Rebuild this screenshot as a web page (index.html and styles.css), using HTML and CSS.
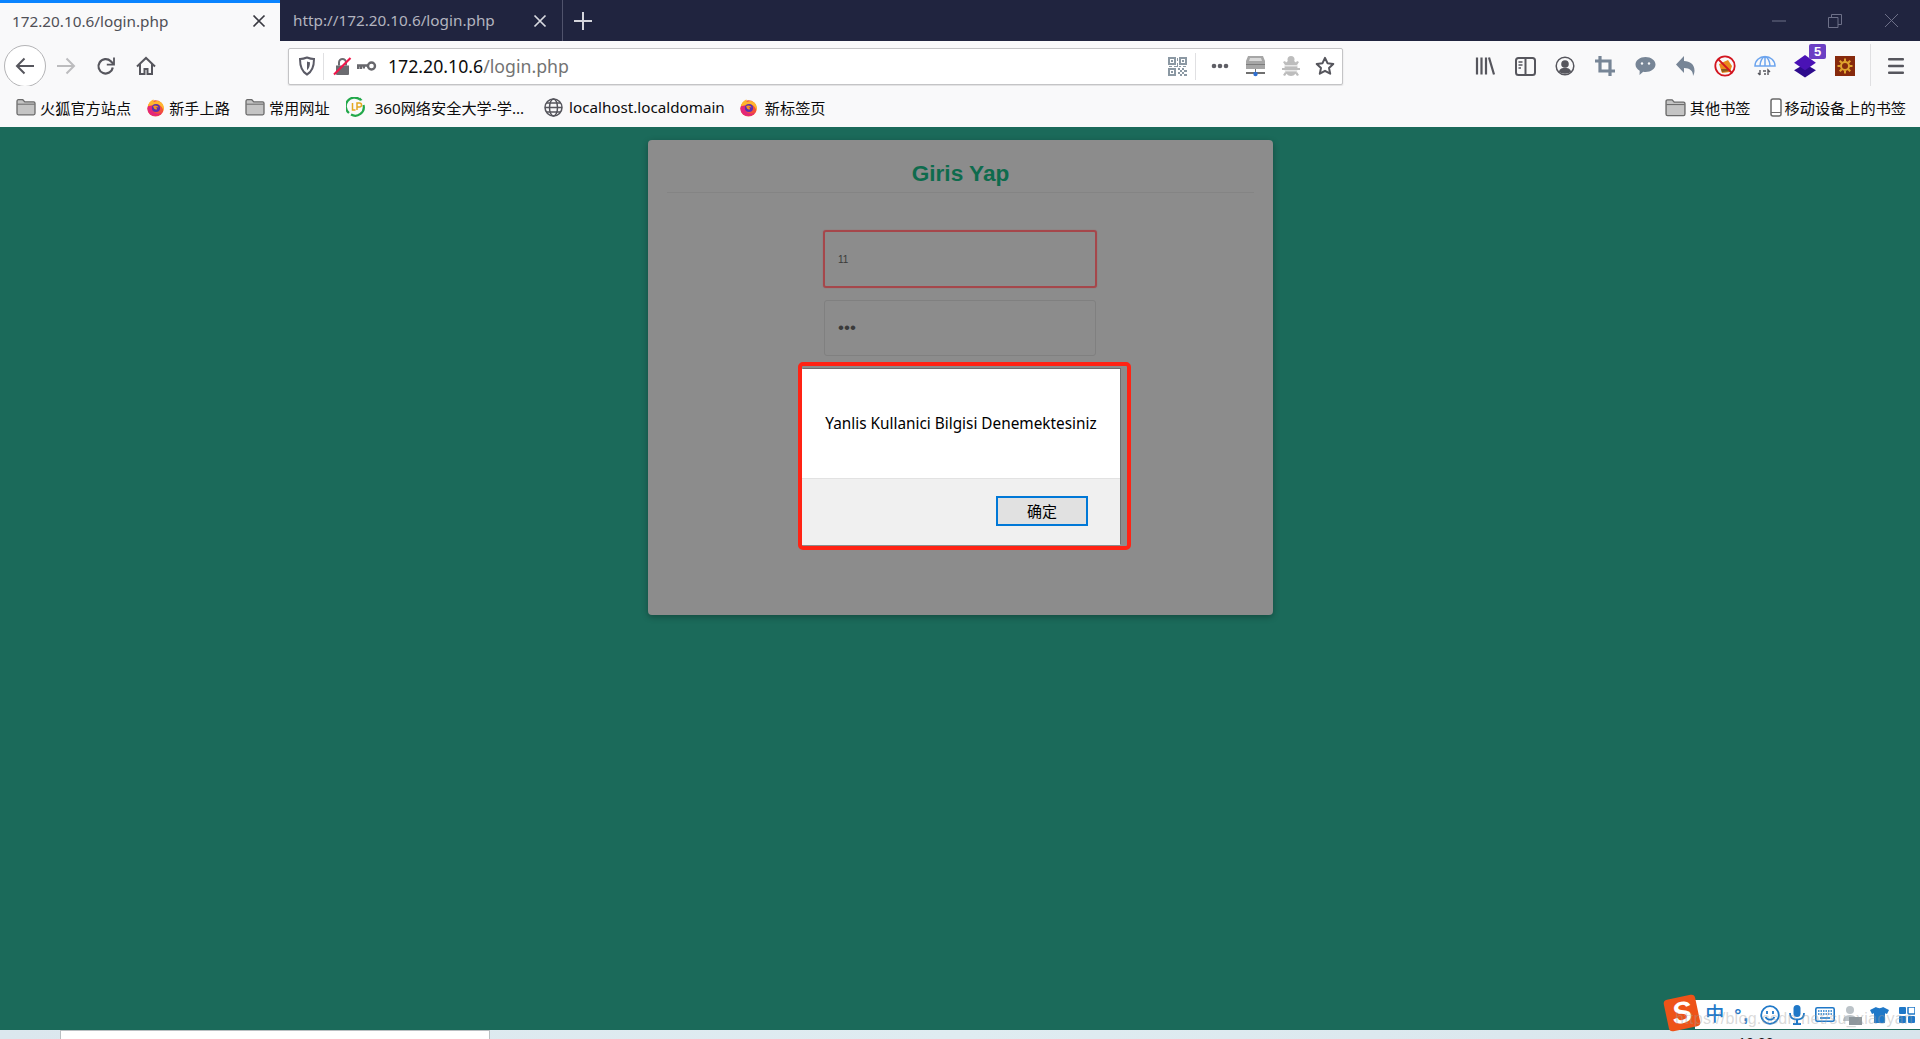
FILE: index.html
```html
<!DOCTYPE html>
<html lang="tr">
<head>
<meta charset="utf-8">
<title>Giris Yap</title>
<link rel="stylesheet" href="styles.css">
</head>
<body>
<svg class="defs" width="0" height="0" aria-hidden="true">
  <symbol id="folder" viewBox="0 0 20 18"><path d="M1 3.200c0-.9.6-1.500 1.400-1.500h4.400l2 2.200h8.800c.8 0 1.400.6 1.400 1.400v10c0 .9-.6 1.500-1.400 1.500H2.400c-.8 0-1.400-.6-1.400-1.500z" fill="#c4c4c4" stroke="#6a6a6a" stroke-width="1.300"/><path d="M1.400 6.200h17.200" stroke="#6a6a6a" stroke-width="1"/></symbol>
  <symbol id="fox" viewBox="0 0 20 20"><circle cx="10" cy="11" r="8.600" fill="#f2503c"/><path d="M2 8.500C3 4 6 2 8 1.500 7.400 3 8 3.800 9 4c3-1.600 7-.6 9 3 1 2 1.200 5 .3 7-.4-3.500-2.300-6-5-7z" fill="#ffb52e"/><path d="M2 9c-1.500 5 2 10 8 10 3 0 5.500-1.500 7-4-3 2.500-8 2-10-1.500C6 11 6 9 7 8z" fill="#e3267a"/><circle cx="10.500" cy="10.500" r="4.300" fill="#5b2fb0"/><path d="M7.500 8.500c2-1.300 5-.6 5.800 1.500-1.300-.6-2.300-.4-3 .2 1 .2 1.500.9 1.300 1.700-1.500.8-3.500 0-4.100-3.400z" fill="#f7921e"/></symbol>
</svg>

<header class="tabbar">
  <div class="tab tab-active">
    <span class="tab-title">172.20.10.6/login.php</span>
    <svg class="tab-x" width="14" height="14" viewBox="0 0 14 14"><path d="M1.500 1.500l11 11M12.500 1.500l-11 11" stroke="#3a3a42" stroke-width="1.700"/></svg>
  </div>
  <div class="tab tab-idle">
    <span class="tab-title">http://172.20.10.6/login.php</span>
    <svg class="tab-x" width="14" height="14" viewBox="0 0 14 14"><path d="M1.500 1.500l11 11M12.500 1.500l-11 11" stroke="#d8d9e0" stroke-width="1.700"/></svg>
  </div>
  <div class="newtab"><svg width="18" height="18" viewBox="0 0 18 18"><path d="M9 0v18M0 9h18" stroke="#d4d5dc" stroke-width="2"/></svg></div>
  <div class="winctl">
    <svg width="14" height="14" viewBox="0 0 14 14"><path d="M0 7h14" stroke="#6d7088" stroke-width="1"/></svg>
    <svg width="14" height="14" viewBox="0 0 14 14" fill="none" stroke="#6d7088"><path d="M.5 3.500h9.500v10H.5zM3.500 3.500v-3h10v10H10"/></svg>
    <svg width="15" height="15" viewBox="0 0 15 15"><path d="M1 1l13 13M14 1L1 14" stroke="#6d7088" stroke-width="1"/></svg>
  </div>
</header>

<nav class="navbar">
  <div class="btn-back"><svg width="20" height="20" viewBox="0 0 20 20" fill="none" stroke="#56565d" stroke-width="2"><path d="M19 10H2M9.500 2.500L2 10l7.500 7.500"/></svg></div>
  <div class="navbtn"><svg width="20" height="20" viewBox="0 0 20 20" fill="none" stroke="#bcbcbe" stroke-width="2"><path d="M1 10h17M10.500 2.500L18 10l-7.500 7.500"/></svg></div>
  <div class="navbtn"><svg width="20" height="20" viewBox="0 0 20 20" fill="none" stroke="#56565d" stroke-width="2.200"><path d="M16.800 11.500a7.200 7.200 0 1 1-2-6.300L17.500 8"/><path d="M18 1.500v7.200h-7.200" stroke-width="1.800"/></svg></div>
  <div class="navbtn"><svg width="20" height="20" viewBox="0 0 20 20" fill="none" stroke="#56565d" stroke-width="2"><path d="M1 10.500L10 2l9 8.500"/><path d="M4 8v10h4.500v-5h3v5H16V8"/></svg></div>

  <div class="urlbar">
    <svg class="u-shield" width="18" height="20" viewBox="0 0 18 20" fill="none" stroke="#5b5b66" stroke-width="2"><path d="M9 1.500c2.500 1 4.500 1.500 7 1.500 0 7-1.500 12.500-7 15.500C3.500 15.500 2 10 2 3c2.500 0 4.500-.5 7-1.500z"/><path d="M9 5.500c1 .4 2 .6 3 .7 0 3.500-.8 6.300-3 8z" fill="#5b5b66" stroke="none"/></svg>
    <span class="u-sep"></span>
    <svg class="u-lock" width="19" height="20" viewBox="0 0 19 20"><path d="M3 9.500h13V18a1 1 0 0 1-1 1H4a1 1 0 0 1-1-1z" fill="#6b6b70"/><path d="M6 9.500V6.500a3.500 3.500 0 0 1 7 0v3" fill="none" stroke="#6b6b70" stroke-width="2"/><path d="M1 18.500L17.500 2" stroke="#f0174a" stroke-width="2.200"/></svg>
    <svg class="u-key" width="20" height="12" viewBox="0 0 20 12" fill="none" stroke="#67676c"><circle cx="14.500" cy="6" r="3.500" stroke-width="2.400"/><path d="M11 5.500H1V9M3.800 5.500V9M6.800 5.500V8.500" stroke-width="2.400"/></svg>
    <span class="u-text"><span class="u-host">172.20.10.6</span><span class="u-path">/login.php</span></span>
    <svg class="u-qr" width="19" height="19" viewBox="0 0 19 19" fill="#8b98a3"><path d="M0 0h8v8H0zm2 2v4h4V2zM11 0h8v8h-8zm2 2v4h4V2zM0 11h8v8H0zm2 2v4h4v-4z" fill-rule="evenodd"/><path d="M3 3h2v2H3zM14 3h2v2h-2zM3 14h2v2H3zM9 1h1v3H9zM9 6h1v4H9zM1 9h3v1H1zM6 9h3v1H6zM11 9h2v1h-2zM15 9h3v1h-3zM10 11h2v2h-2zM14 11h2v2h-2zM12 13h2v2h-2zM16 13h3v2h-3zM10 15h2v2h-2zM14 15h2v2h-2zM12 17h2v2h-2zM16 17h3v2h-3z"/></svg>
    <span class="u-sep u-sep2"></span>
    <svg class="u-dots" width="18" height="6" viewBox="0 0 18 6" fill="#5f5f66"><circle cx="3" cy="3" r="2.300"/><circle cx="9" cy="3" r="2.300"/><circle cx="15" cy="3" r="2.300"/></svg>
    <svg class="u-srv" width="21" height="22" viewBox="0 0 21 22"><path d="M3 1h15l2 5v8H1V6z" fill="#a6a6a6"/><path d="M5 3h11l1 3H4z" fill="#d8d8d8"/><path d="M1 9h19v1H1z" fill="#7d7d7d"/><path d="M10 14h1v4h-1zM1 17h19v2H1z" fill="#6f6f6f"/><circle cx="10.500" cy="19" r="2.200" fill="#2f6fd1"/></svg>
    <svg class="u-bug" width="18" height="22" viewBox="0 0 18 22" fill="#bdbdbd"><ellipse cx="9" cy="13" rx="6.500" ry="8"/><circle cx="9" cy="4.500" r="3.500"/><path d="M1 7l2-1 2 3-2 1zM17 7l-2-1-2 3 2 1zM0 13h3v2H0zM15 13h3v2h-3zM1 20l2 1 2-3-2-1zM17 20l-2 1-2-3 2-1z"/><path d="M3 10h12v1.500H3zM3 15h12v1.500H3z" fill="#e8e8e8"/></svg>
    <svg class="u-star" width="20" height="20" viewBox="0 0 20 20" fill="none" stroke="#55555c" stroke-width="2" stroke-linejoin="round"><path d="M10 1.800l2.500 5.400 5.800.7-4.300 4 1.200 5.800L10 14.800l-5.200 2.900L6 11.900l-4.300-4 5.800-.7z"/></svg>
  </div>

  <div class="tools">
    <div class="tool"><svg width="20" height="20" viewBox="0 0 20 20" fill="none" stroke="#56565d" stroke-width="2.200"><path d="M2 1.500v17M6.500 1.500v17M11 1.500v17M14 1.500l5 17"/></svg></div>
    <div class="tool"><svg width="21" height="19" viewBox="0 0 21 19" fill="none" stroke="#56565d" stroke-width="2"><rect x="1" y="1" width="19" height="17" rx="2.500"/><path d="M10.500 1v17"/><path d="M3.500 5h4M3.500 8h4M3.500 11h2.500" stroke-width="1.500"/></svg></div>
    <div class="tool"><svg width="20" height="20" viewBox="0 0 20 20"><circle cx="10" cy="10" r="8.800" fill="none" stroke="#56565d" stroke-width="1.500"/><circle cx="10" cy="8" r="3.800" fill="#56565d"/><path d="M3.800 15.500c1-2.800 3.500-3.800 6.200-3.800s5.200 1 6.200 3.800c-3.500 3-8.900 3-12.400 0z" fill="#56565d"/></svg></div>
    <div class="tool"><svg width="20" height="20" viewBox="0 0 20 20" fill="none" stroke="#778596" stroke-width="3.200"><path d="M5 0v15h15M0 5h15v15"/></svg></div>
    <div class="tool"><svg width="21" height="20" viewBox="0 0 21 20"><path d="M10.500 1C16 1 20.500 4.300 20.500 8.500S16 16 10.500 16c-.8 0-1.500 0-2.300-.2L4.500 19l.2-4.200C2.200 13.400.5 11.100.5 8.500.5 4.300 5 1 10.500 1z" fill="#778596"/><circle cx="7" cy="7.500" r="1.200" fill="#f9f9fa"/><circle cx="14" cy="7.500" r="1.200" fill="#f9f9fa"/></svg></div>
    <div class="tool"><svg width="19" height="20" viewBox="0 0 19 20"><path d="M8 0v5c6 0 10.500 3.500 10.500 9.500 0 2-.6 4-1.500 5.500.3-5-3-8-9-8v5L0 8.500z" fill="#778596"/></svg></div>
    <div class="tool"><svg width="22" height="22" viewBox="0 0 22 22"><path d="M5 9l9-4 4 6-2 6-8 1z" fill="#e98a1c"/><path d="M7 14h7l1 2-7 1z" fill="#8a5a20"/><circle cx="11" cy="11" r="9.700" fill="none" stroke="#d3151f" stroke-width="1.800"/><path d="M4 4l14 14" stroke="#d3151f" stroke-width="1.800"/></svg></div>
    <div class="tool"><svg width="22" height="22" viewBox="0 0 22 22" fill="none" stroke="#6ea5ee" stroke-width="1.500"><path d="M1 11a10 9.500 0 0 1 20 0H1zM6 11c0-5 2.500-9 5-9.500 2.500.5 5 4.500 5 9.500M11 1.500V11"/><path d="M6 15v5M4 18l2 2M14 20v-5l2 2M9 16h3M10 19h2" stroke="#55555c" stroke-width="1.400"/></svg></div>
    <div class="tool tool-badge"><svg width="24" height="24" viewBox="0 0 22 22"><path d="M11 9l10 6-10 6.500L1 15z" fill="#2d0b8c"/><path d="M11 1l10 7-10 7L1 8z" fill="#4a12b5"/></svg><span class="badge">5</span></div>
    <div class="tool"><svg width="20" height="20" viewBox="0 0 20 20"><rect width="20" height="20" fill="#872a0d"/><circle cx="10" cy="10" r="4" fill="none" stroke="#e0a32e" stroke-width="2"/><path d="M10 2.500v3M10 14.500v3M2.500 10h3M14.500 10h3M4.700 4.700l2.100 2.100M13.200 13.200l2.100 2.100M15.300 4.700l-2.100 2.100M6.800 13.200l-2.100 2.100" stroke="#e0a32e" stroke-width="2"/></svg></div>
    <span class="tool-sep"></span>
    <div class="tool"><svg width="16" height="16" viewBox="0 0 16 16" fill="#56565d"><rect y="0" width="16" height="2.400" rx="1"/><rect y="6.800" width="16" height="2.400" rx="1"/><rect y="13.600" width="16" height="2.400" rx="1"/></svg></div>
  </div>
</nav>

<div class="bookmarks">
  <a class="bm bm-1"><svg class="bm-icon" width="20" height="18"><use href="#folder"/></svg>火狐官方站点</a>
  <a class="bm bm-2"><svg class="bm-icon" width="19" height="19"><use href="#fox"/></svg>新手上路</a>
  <a class="bm bm-3"><svg class="bm-icon" width="20" height="18"><use href="#folder"/></svg>常用网址</a>
  <a class="bm bm-4"><svg class="bm-icon bm-icon-wide" width="19" height="20" viewBox="0 0 19 20" fill="none"><path d="M14 2.500A8.500 8.500 0 0 0 3 16" stroke="#22a84a" stroke-width="2.200"/><path d="M5 17.500A8.500 8.500 0 0 0 17.500 8" stroke="#22a84a" stroke-width="2.200"/><path d="M6.500 6v7h3M11 13V6h2.500a2 2 0 0 1 0 4H11" stroke="#e3a81f" stroke-width="1.500"/><path d="M14 .5l2.500 2.500-3 1z" fill="#22a84a"/></svg>360网络安全大学-学...</a>
  <a class="bm bm-5"><svg class="bm-icon bm-icon-globe" width="19" height="19" viewBox="0 0 19 19" fill="none" stroke="#55555c" stroke-width="1.500"><circle cx="9.500" cy="9.500" r="8.500"/><ellipse cx="9.500" cy="9.500" rx="4" ry="8.500"/><path d="M1 9.500h17M2.500 5h14M2.500 14h14"/></svg>localhost.localdomain</a>
  <a class="bm bm-6"><svg class="bm-icon bm-icon-new" width="19" height="19"><use href="#fox"/></svg>新标签页</a>
  <a class="bm bm-7"><svg class="bm-icon" width="21" height="19"><use href="#folder"/></svg>其他书签</a>
  <a class="bm bm-8"><svg class="bm-phone" width="12" height="19" viewBox="0 0 12 19"><rect x="1" y="1" width="10" height="17" rx="2" fill="#fff" stroke="#6a6a6a" stroke-width="1.500"/><path d="M1 14.500h10" stroke="#6a6a6a"/></svg>移动设备上的书签</a>
</div>

<main class="page">
  <section class="card">
    <h2 class="card-title">Giris Yap</h2>
    <form class="form">
      <input class="field field-error" type="text" value="11">
      <input class="field field-pass" type="password" value="111">
    </form>
  </section>

  <div class="annot">
    <div class="dialog" role="alertdialog">
      <div class="dialog-msg">Yanlis Kullanici Bilgisi Denemektesiniz</div>
      <div class="dialog-foot"><button class="dialog-ok" type="button">确定</button></div>
    </div>
  </div>

  <div class="ime">
    <span class="ime-logo">S</span>
    <span class="ime-item ime-zh">中</span>
    <span class="ime-item ime-punct">°,</span>
    <span class="ime-item"><svg width="20" height="20" viewBox="0 0 20 20" fill="none" stroke="#1f78c8" stroke-width="1.800"><circle cx="10" cy="10" r="8.800"/><path d="M7 6v3M13 6v3M5.500 12c2 3.500 7 3.500 9 0"/></svg></span>
    <span class="ime-item"><svg width="16" height="20" viewBox="0 0 16 20" fill="#1f78c8"><rect x="4.500" y="0" width="7" height="12" rx="3.500"/><path d="M1 8c0 5 3 6.500 7 6.500S15 13 15 8" fill="none" stroke="#1f78c8" stroke-width="1.800"/><path d="M7 14h2v4h3v2H4v-2h3z"/></svg></span>
    <span class="ime-item"><svg width="20" height="15" viewBox="0 0 20 15"><rect x=".8" y=".8" width="18.400" height="13.400" rx="1.500" fill="none" stroke="#1f78c8" stroke-width="1.600"/><path d="M3 4h14M3 7h14" stroke="#1f78c8" stroke-width="1.600" stroke-dasharray="1.500 1"/><path d="M5 11h10" stroke="#1f78c8" stroke-width="1.600"/></svg></span>
    <span class="ime-item"><svg width="20" height="20" viewBox="0 0 20 20"><circle cx="8" cy="5" r="4" fill="#bcc3c8"/><path d="M1 16c0-4 3-6 7-6s7 2 7 6z" fill="#bcc3c8"/><rect x="7" y="12" width="13" height="8" fill="#8e979d"/></svg></span>
    <span class="ime-item"><svg width="19" height="16" viewBox="0 0 19 16"><path d="M6 0c1.500 1.500 5.500 1.500 7 0l6 3-2 4-2-.8V16H4V6.200L2 7 0 3z" fill="#1f78c8"/></svg></span>
    <span class="ime-item"><svg width="16" height="16" viewBox="0 0 16 16" fill="#1f78c8"><rect width="7" height="7" rx="1"/><rect x="9" width="7" height="7" rx="1" fill="none" stroke="#1f78c8" stroke-width="1.500"/><rect y="9" width="7" height="7" rx="1"/><rect x="9" y="9" width="7" height="7" rx="1"/></svg></span>
    <span class="ime-mark">https://blog.csdn.net/su_xiaoyan</span>
  </div>
</main>

<footer class="taskbar">
  <span class="task-window"></span>
  <span class="task-clock">19:00</span>
</footer>
</body>
</html>
```

FILE: styles.css
```css
* { box-sizing: border-box; }

html, body { height: 100%; }

body {
  margin: 0;
  height: 1039px;
  overflow: hidden;
  display: flex;
  flex-direction: column;
  font-family: "Noto Sans", "Noto Sans CJK SC", sans-serif;
  color: #0c0c0d;
  background: #1b6a5a;
}

.defs { position: absolute; }

/* Tab strip */
.tabbar {
  flex: 0 0 41px;
  min-height: 0;
  display: flex;
  background: #20243f;
}

.tab {
  display: flex;
  align-items: center;
  justify-content: space-between;
  font-size: 15.300px;
}

.tab-title { margin-top: -3px; white-space: nowrap; }
.tab-x { margin-top: -2px; }

.tab-active {
  width: 280px;
  padding: 0 14px 0 12px;
  background: #f9f9fa;
  border-top: 3px solid #0a84ff;
  color: #4f4f56;
}

.tab-idle {
  width: 283px;
  padding: 0 15px 0 13px;
  border-right: 1px solid #50536c;
  color: #b3b4bf;
}

.tab-idle .tab-title { margin-top: -1px; }
.tab-idle .tab-x { margin-top: 0; }

.newtab {
  width: 40px;
  display: flex;
  align-items: center;
  justify-content: center;
}

.winctl {
  margin-left: auto;
  padding: 0 21px 0 0;
  display: flex;
  align-items: center;
  gap: 42px;
}

/* Navigation bar */
.navbar {
  flex: 0 0 45px;
  min-height: 0;
  display: flex;
  align-items: center;
  padding-top: 5px;
  background: #f9f9fa;
}

.btn-back {
  width: 42px;
  height: 42px;
  margin-left: 4px;
  border: 1px solid #b4b4b6;
  border-radius: 50%;
  background: #fff;
  display: flex;
  align-items: center;
  justify-content: center;
}

.navbtn {
  width: 40px;
  display: flex;
  justify-content: center;
}

.urlbar {
  width: 1055px;
  height: 37px;
  margin-left: 122px;
  display: flex;
  align-items: center;
  background: #fff;
  border: 1px solid #c4c4c6;
  border-radius: 2px;
  box-shadow: 0 1px 2px rgba(0, 0, 0, .12);
}

.u-shield { margin-left: 9px; }
.u-sep { width: 1px; height: 27px; margin-left: 7px; background: #e0e0e2; }
.u-lock { margin-left: 9px; }
.u-key { margin-left: 5px; }
.u-text { margin-left: 11px; font-size: 17.700px; white-space: nowrap; }
.u-host { color: #0c0c0d; }
.u-path { color: #737373; }
.u-qr { margin-left: auto; }
.u-sep2 { margin-left: 8px; }
.u-dots { margin-left: 15px; }
.u-srv { margin-left: 16px; }
.u-bug { margin-left: 16px; }
.u-star { margin-left: 15px; margin-right: 7px; }

.tools {
  margin-left: auto;
  margin-right: 4px;
  display: flex;
  align-items: center;
}

.tool {
  width: 40px;
  height: 24px;
  display: flex;
  align-items: center;
  justify-content: center;
}

.tool-badge { position: relative; }

.badge {
  position: absolute;
  top: -10px;
  left: 24px;
  width: 17px;
  height: 15px;
  border-radius: 2px;
  background: #6b3fc4;
  color: #fff;
  font: bold 13px/15px "Liberation Sans", sans-serif;
  text-align: center;
}

.tool-sep {
  width: 1px;
  height: 44px;
  margin: 0 5px;
  background: #e0e0e2;
}

/* Bookmarks */
.bookmarks {
  flex: 0 0 41px;
  min-height: 0;
  display: flex;
  align-items: center;
  padding: 1px 14px 0 16px;
  background: #f9f9fa;
  font-size: 15.200px;
  white-space: nowrap;
}

.bm {
  display: flex;
  align-items: center;
  color: #0c0c0d;
  height: 24px;
}

.bm-icon { margin-right: 4px; flex: none; }
.bm-icon-wide { margin-right: 10px; }
.bm-icon-globe { margin-right: 6px; }
.bm-icon-new { margin-right: 7px; }
.bm-phone { margin-right: 3px; flex: none; }
.bm-2 { margin-left: 15px; }
.bm-3 { margin-left: 15px; }
.bm-4 { margin-left: 16px; }
.bm-5 { margin-left: 20px; }
.bm-6 { margin-left: 14px; }
.bm-7 { margin-left: auto; }
.bm-8 { margin-left: 19px; }

/* Page */
.page {
  flex: 1;
  min-height: 0;
  position: relative;
  background: #1b6a5a;
}

.card {
  width: 625px;
  height: 475px;
  margin: 13px 0 0 648px;
  padding: 0 19px;
  background: #8c8c8c;
  border-radius: 4px;
  box-shadow: 0 2px 6px rgba(0, 0, 0, .3);
}

.card-title {
  height: 53px;
  margin: 0;
  padding-top: 20px;
  font: bold 22.600px/28px "Liberation Sans", Arial, sans-serif;
  text-align: center;
  color: #0e6b4d;
  border-bottom: 1px solid #848484;
}

.form {
  padding: 37px 1px 0 0;
  display: flex;
  flex-direction: column;
  align-items: center;
}

.field {
  display: block;
  background: transparent;
  font-family: "Liberation Sans", Arial, sans-serif;
  color: #3a3a3a;
  outline: none;
  border-radius: 3px;
  padding: 0 13px;
}

.field-error {
  width: 274px;
  height: 58px;
  font-size: 10px;
  border: 2px solid #a5474b;
  box-shadow: 0 0 1px #a5474b;
}

.field-pass {
  width: 272px;
  height: 56px;
  margin-top: 12px;
  font-size: 17px;
  border: 1px solid #808080;
}

/* Alert with red annotation */
.annot {
  position: absolute;
  left: 798px;
  top: 235px;
  width: 333px;
  height: 188px;
  padding: 3px 7px 0 0;
  border: 4px solid #ff2314;
  border-radius: 5px;
}

.dialog {
  width: 318px;
  height: 176px;
  background: #fff;
  box-shadow: 1px -1px 0 #6f6f6f;
  display: flex;
  flex-direction: column;
}

.dialog-msg {
  flex: 0 0 109px;
  display: flex;
  align-items: center;
  justify-content: center;
  padding-bottom: 2px;
  font-size: 15.350px;
  color: #000;
  white-space: nowrap;
}

.dialog-foot {
  flex: 1;
  display: flex;
  align-items: flex-start;
  justify-content: flex-end;
  padding: 17px 32px 0 0;
  background: #f0f0f0;
  border-top: 1px solid #e2e2e2;
}

.dialog-ok {
  width: 92px;
  height: 30px;
  padding: 0;
  font: 15px/26px "Noto Sans CJK SC", sans-serif;
  color: #000;
  background: #e1e1e1;
  border: 2px solid #0078d7;
}

/* IME toolbar */
.ime {
  position: absolute;
  right: 0;
  bottom: 1px;
  width: 225px;
  height: 29px;
  padding-left: 6px;
  display: flex;
  align-items: center;
  background: #fff;
}

.ime-item {
  flex: 0 0 27.500px;
  display: flex;
  align-items: center;
  justify-content: center;
  color: #1f78c8;
}

.ime-zh { font-size: 19px; font-weight: 500; line-height: 1; }
.ime-punct { font: bold 18px/1 "Liberation Sans", sans-serif; letter-spacing: 2px; }

.ime-logo {
  position: absolute;
  left: -29px;
  top: -3px;
  width: 32px;
  height: 32px;
  border-radius: 4px;
  background: #ee5318;
  color: #fff;
  font: italic bold 30px/32px "Liberation Sans", sans-serif;
  text-align: center;
  transform: rotate(-12deg);
}

.ime-mark {
  position: absolute;
  left: -20px;
  top: 10px;
  font: 16px/18px "Liberation Sans", sans-serif;
  letter-spacing: .3px;
  color: rgba(160, 160, 160, .4);
  white-space: nowrap;
}

/* Taskbar */
.taskbar {
  flex: 0 0 9px;
  min-height: 0;
  display: flex;
  overflow: hidden;
  background: linear-gradient(90deg, #dbe7ee, #dfecf1 50%, #d8e5ec);
}

.task-window {
  width: 430px;
  height: 20px;
  margin-left: 60px;
  background: #fff;
  border: 1px solid #b9bfc2;
}

.task-clock {
  margin: 6px 0 0 1248px;
  font-size: 14px;
  line-height: 14px;
  color: #111;
}
```
